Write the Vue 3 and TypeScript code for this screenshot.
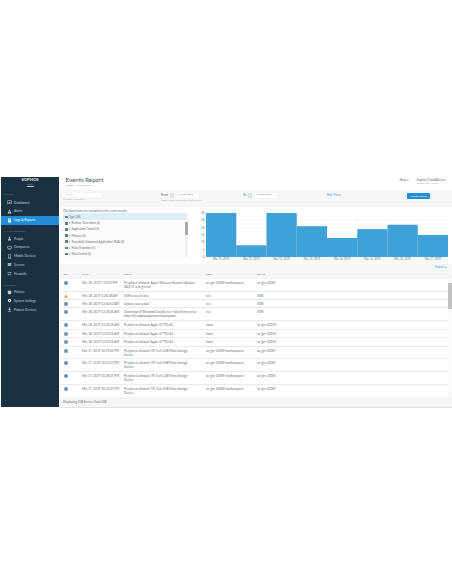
<script setup lang="ts">
interface NavItem { label: string; icon: string; active?: boolean }
interface NavGroup { title: string; items: NavItem[] }
interface EventRow { icon: string; when: string; text: string[]; user: string; device: string }

const groups: NavGroup[] = [
  {
    title: 'ANALYZE',
    items: [
      { label: 'Dashboard', icon: 'M1 1h8v7H1zM2 2v5h6V2zM3 6l1.500-2L6 5l1-1.500V6z' },
      { label: 'Alerts', icon: 'M5 1l4 8H1zM4.500 4v2.500h1V4zM4.500 7v1h1V7z' },
      { label: 'Logs & Reports', icon: 'M2 1h6v8H2zM3 3v.8h4V3zM3 5v.8h4V5z', active: true },
    ],
  },
  {
    title: 'MANAGE PROTECTION',
    items: [
      { label: 'People', icon: 'M5 1.500a1.500 1.500 0 110 3 1.500 1.500 0 010-3zM2 9c0-2.500 1.200-4 3-4s3 1.500 3 4z' },
      { label: 'Computers', icon: 'M1 2h8v5H1zM2 3v3h6V3zM3 8h4v.8H3z' },
      { label: 'Mobile Devices', icon: 'M2 1h6v8H2zM3 2v5.500h4V2z' },
      { label: 'Servers', icon: 'M1.500 2h7v1.500h-7zM1.500 4.300h7v1.500h-7zM1.500 6.600h7v1.500h-7z' },
      { label: 'Firewalls', icon: 'M1 3h6V1.500L9 3.500 7 5.200V4H1zM9 6.500H3V5L1 7l2 1.800V7.500h6z' },
    ],
  },
  {
    title: 'CONFIGURE',
    items: [
      { label: 'Policies', icon: 'M5 1l3.500 1.200V5c0 2-1.500 3.300-3.500 4-2-.7-3.500-2-3.500-4V2.200z' },
      { label: 'System Settings', icon: 'M5 1.500a3.500 3.500 0 110 7 3.500 3.500 0 010-7zM5 3.800a1.200 1.200 0 100 2.400 1.200 1.200 0 000-2.400z' },
      { label: 'Protect Devices', icon: 'M4.200 1h1.600v3.500H8L5 7.500 2 4.500h2.200zM1.500 8h7v1h-7z' },
    ],
  },
]

const filters = [
  'Type (28)',
  'Runtime Detections (4)',
  'Application Control (3)',
  'Malware (0)',
  'Potentially Unwanted Application (PUA) (0)',
  'Policy Violations (1)',
  'Web Control (0)',
]

const bars = [30, 8, 30, 21, 13, 19, 22, 15]
const dates = ['Mar 10, 2019', 'Mar 11, 2019', 'Mar 12, 2019', 'Mar 13, 2019', 'Mar 14, 2019', 'Mar 15, 2019', 'Mar 16, 2019', 'Mar 17, 2019']
const ticks = [0, 5, 10, 15, 20, 25, 30]
const CHART_H = 44
const SLOT = 30.25
const yOf = (v: number) => 5 + CHART_H - (v / 30) * CHART_H

const itf = ['Peripheral allowed: ITE Tech USB Mass Storage', 'Device']
const rows: EventRow[] = [
  { icon: 'info', when: 'Mar 18, 2019 7:39:52 PM', text: ['Peripheral allowed: Apple Wireless Network Adapter', '(802.11 a/b/g/n/ac)'], user: 'au-gin-22GM\\markanspenc', device: 'au-gin-22GM' },
  { icon: 'warn', when: 'Mar 18, 2019 1:26:28 AM', text: ['SGN is out of date'], user: 'n/a', device: 'SGN' },
  { icon: 'info', when: 'Mar 18, 2019 12:40:52 AM', text: ['Update succeeded'], user: 'n/a', device: 'SGN' },
  { icon: 'info', when: 'Mar 18, 2019 12:30:05 AM', text: ['Download of WindowsCloudServer failed from server', 'http://d1.sophosupd.com/cloudupdate'], user: 'n/a', device: 'SGN' },
  { icon: 'info', when: 'Mar 18, 2019 12:03:16 AM', text: ['Peripheral allowed: Apple 07792-A3'], user: 'swan', device: 'au-gin-22G76' },
  { icon: 'info', when: 'Mar 18, 2019 12:03:16 AM', text: ['Peripheral allowed: Apple 07792-A3'], user: 'swan', device: 'au-gin-22G76' },
  { icon: 'info', when: 'Mar 18, 2019 12:03:16 AM', text: ['Peripheral allowed: Apple 07792-A3'], user: 'swan', device: 'au-gin-22G76' },
  { icon: 'info', when: 'Mar 17, 2019 10:19:05 PM', text: itf, user: 'au-gin-22GM\\markanspenc', device: 'au-gin-22GM' },
  { icon: 'info', when: 'Mar 17, 2019 10:13:13 PM', text: itf, user: 'au-gin-22GM\\markanspenc', device: 'au-gin-22GM' },
  { icon: 'info', when: 'Mar 17, 2019 10:38:31 PM', text: itf, user: 'au-gin-22GM\\markanspenc', device: 'au-gin-22GM' },
  { icon: 'info', when: 'Mar 17, 2019 10:32:31 PM', text: itf, user: 'au-gin-22GM\\markanspenc', device: 'au-gin-22GM' },
]
</script>

<template>
  <div class="page">
    <div class="app">
      <aside class="sidebar">
        <div class="logo">
          <div class="logo-name">SOPHOS</div>
          <div class="logo-sub">Central</div>
          <div class="logo-bar"></div>
        </div>
        <section v-for="g in groups" :key="g.title" class="nav-group">
          <div class="nav-title">{{ g.title }}</div>
          <div v-for="item in g.items" :key="item.label" class="nav-item" :class="{ active: item.active }">
            <svg class="nav-icon" viewBox="0 0 10 10"><path :d="item.icon" fill="currentColor" fill-rule="evenodd" /></svg>
            <span>{{ item.label }}</span>
          </div>
        </section>
      </aside>

      <main class="main">
        <header class="header">
          <div>
            <h1>Events Report</h1>
            <div class="crumbs"><span class="crumb-link">Reports</span><span>Events Report</span></div>
          </div>
          <div class="header-right">
            <span class="help">Help ▾</span>
            <div class="account">
              <div>Sophos CloudAllied ▾</div>
              <div class="account-sub">Sophos Ltd. · Admin</div>
            </div>
          </div>
        </header>

        <div class="filter-bar">
          <div class="search-col">
            <div class="search-box">Search</div>
            <div class="hint">For name or devices</div>
          </div>
          <div class="date-col">
            <div class="date-row">
              <div class="date-group">
                <span class="date-label">From</span><span class="cal"></span><span class="date-input">Mar 10, 2019</span>
              </div>
              <div class="date-group">
                <span class="date-label short">To</span><span class="cal"></span><span class="date-input">Mar 18, 2019</span>
              </div>
            </div>
            <div class="hint">Specify date range within past 90 days</div>
          </div>
          <a class="hide-link">Hide Filters</a>
          <button class="update-btn">Update Report</button>
        </div>

        <div class="filter-panel">
          <div class="check-col">
            <div class="check-title">Checked items are included in the event results</div>
            <div class="check-list">
              <div class="check-items">
                <div v-for="(f, i) in filters" :key="f" class="check-item" :class="{ first: i === 0 }">
                  <span class="tick"></span><span v-if="i > 0" class="caret"></span><span>{{ f }}</span>
                </div>
              </div>
              <div class="check-scroll"><span></span></div>
            </div>
          </div>
          <svg class="chart" viewBox="0 0 254 56" width="254" height="56">
            <g v-for="t in ticks" :key="t">
              <line x1="12" x2="254" :y1="yOf(t)" :y2="yOf(t)" stroke="#eceff1" stroke-width="0.4" />
              <text x="10.500" :y="yOf(t) + 1" text-anchor="end" class="tick-label">{{ t }}</text>
            </g>
            <line v-for="(d, i) in dates" :key="'v' + d" :x1="12 + i * SLOT" :x2="12 + i * SLOT" y1="5" y2="49" stroke="#eceff1" stroke-width="0.4" />
            <rect v-for="(b, i) in bars" :key="i" :x="12 + i * SLOT" :y="yOf(b)" :width="SLOT" :height="yOf(0) - yOf(b)" fill="#3fa1d8" />
            <text v-for="(d, i) in dates" :key="d" :x="12 + (i + 0.5) * SLOT" y="52.300" text-anchor="middle" class="tick-label">{{ d }}</text>
          </svg>
        </div>

        <div class="export-row"><a>Export ▴</a></div>

        <div class="t-row t-head">
          <div class="c-sev">SEV</div><div class="c-when">WHEN</div><div class="c-event">EVENT</div><div class="c-user">USER</div><div class="c-device">DEVICE</div>
        </div>
        <div class="t-body">
          <div class="t-rows">
            <div v-for="(r, i) in rows" :key="i" class="t-row" :class="{ two: r.text.length > 1 }">
              <div class="c-sev">
                <svg v-if="r.icon === 'warn'" class="sev" viewBox="0 0 10 10"><path d="M5 .8l4.600 8.400H.4z" fill="#e8b13b" /><path d="M4.600 3.500h.8v3h-.8zM4.600 7h.8v.9h-.8z" fill="#4a3a10" /></svg>
                <svg v-else class="sev" viewBox="0 0 10 10"><rect x="1" y="1" width="8" height="8" fill="#3f7493" /><path d="M3 3.500h4v.8H3zM3 5.500h4v.8H3z" fill="#cfe0ea" /></svg>
              </div>
              <div class="c-when">{{ r.when }}</div>
              <div class="c-event"><div v-for="line in r.text" :key="line">{{ line }}</div></div>
              <div class="c-user">{{ r.user }}</div>
              <div class="c-device">{{ r.device }}</div>
            </div>
          </div>
          <div class="t-scroll"><span></span></div>
        </div>

        <footer class="t-foot">Displaying 208 Events Total 208</footer>
      </main>
    </div>
  </div>
</template>

<style scoped>
.page {
  width: 452px;
  height: 584px;
  padding-top: 177px;
  box-sizing: border-box;
  background: #fff;
  font-family: Lato, 'Liberation Sans', sans-serif;
  font-size: 3.1px;
  color: #667079;
  overflow: hidden;
}
.app {
  display: flex;
  height: 231px;
  padding-left: 1px;
}
.sidebar {
  width: 58px;
  flex: none;
  height: 230px;
  background: #1b3041;
  color: #c9d3da;
  font-size: 3.2px;
}
.logo {
  height: 14.800px;
  text-align: center;
  color: #e6ebee;
}
.logo-name { font-size: 4.200px; line-height: 5.500px; font-weight: 700; }
.logo-sub { font-size: 2px; line-height: 2.500px; color: #8ea0ad; }
.logo-bar { width: 7px; height: 0.800px; background: #c8d1d8; margin: 0.500px auto 0; }
.nav-group { margin-bottom: 3px; }
.nav-title {
  height: 6.500px;
  padding: 1px 0 0 3px;
  box-sizing: border-box;
  font-size: 2px;
  line-height: 3px;
  color: #73889a;
}
.nav-group + .nav-group .nav-title { padding-top: 2.400px; }
.nav-item {
  display: flex;
  align-items: center;
  gap: 2.500px;
  height: 8.800px;
  padding-left: 5.500px;
}
.nav-item.active { background: #1f8ed6; color: #fff; }
.nav-icon { width: 5px; height: 5px; flex: none; }
.main {
  flex: 1;
  min-width: 0;
  margin-left: 1px;
  display: flex;
  flex-direction: column;
}
.header {
  display: flex;
  justify-content: space-between;
  height: 13px;
  padding: 0 6px 0 5.500px;
  box-sizing: border-box;
}
h1 {
  margin: 0;
  font-size: 6.200px;
  line-height: 6.500px;
  font-weight: 400;
  color: #46535d;
}
.crumbs { display: flex; gap: 3px; font-size: 2.500px; line-height: 3.500px; color: #a3adb5; }
.crumb-link { color: #5c9ac6; }
.header-right { display: flex; gap: 8px; padding-top: 0.500px; line-height: 4px; color: #5b6770; }
.account-sub { font-size: 2.500px; line-height: 3px; color: #a3adb5; }
.filter-bar {
  display: flex;
  align-items: flex-start;
  height: 17px;
  padding: 3px 0 0 3px;
  box-sizing: border-box;
  background: #f4f6f8;
}
.search-col { width: 98px; flex: none; }
.search-box {
  width: 39px;
  height: 4.500px;
  line-height: 4.500px;
  padding-left: 3px;
  box-sizing: border-box;
  background: #fff;
  font-size: 2.400px;
  color: #b0b8be;
}
.hint { font-size: 2.400px; line-height: 5px; color: #a3adb5; }
.date-col { width: 166px; flex: none; }
.date-row { display: flex; height: 5px; }
.date-group { display: flex; align-items: center; width: 82px; }
.date-label { width: 9px; flex: none; }
.date-label.short { width: 5px; }
.cal { width: 4px; height: 4.500px; background: #dfe4e8; flex: none; }
.date-input {
  width: 22px;
  height: 4.500px;
  margin-left: 2.500px;
  line-height: 4.500px;
  background: #fff;
  padding-left: 2px;
  box-sizing: border-box;
  font-size: 2.500px;
}
.hide-link { width: 80px; flex: none; color: #5c9ac6; line-height: 5px; font-size: 2.800px; }
.update-btn {
  width: 23px;
  height: 6px;
  padding: 0;
  border: 0;
  border-radius: 1px;
  background: #1f8ed6;
  color: #fff;
  font: inherit;
  font-size: 2.600px;
  white-space: nowrap;
}
.filter-panel {
  display: flex;
  height: 57px;
  padding-left: 3px;
  background: #fff;
}
.check-col { width: 125px; flex: none; padding-top: 2px; }
.check-title { font-size: 3.100px; line-height: 4.500px; color: #5b6770; }
.check-list {
  height: 44px;
  display: flex;
  background: #fafbfc;
}
.check-items { flex: 1; }
.check-item {
  display: flex;
  align-items: center;
  gap: 1.500px;
  height: 6.100px;
  padding-left: 2px;
  font-size: 2.800px;
}
.check-item.first { background: #dcedf8; height: 7px; }
.tick { width: 2.500px; height: 2.500px; background: #6d7a84; }
.caret { width: 0; height: 0; border-left: 1.800px solid #6d7a84; border-top: 1.200px solid transparent; border-bottom: 1.200px solid transparent; }
.check-scroll { width: 3px; background: #f1f1f1; padding-top: 9px; }
.check-scroll span { display: block; height: 13px; background: #a9a9a9; }
.chart { flex: none; margin: 1px 0 0 6px; }
.tick-label { font-size: 2.800px; fill: #5b6770; }
.export-row {
  height: 7px;
  padding-right: 5px;
  box-sizing: border-box;
  text-align: right;
  line-height: 6px;
  background: #f4f6f8;
  color: #5c9ac6;
}
.t-row {
  display: flex;
  height: 8.440px;
  padding-top: 2px;
  box-sizing: border-box;
  border-bottom: 0.500px solid #e8ecef;
  line-height: 4px;
  background: #fff;
}
.t-row.two { height: 12.800px; }
.t-head {
  height: 8px;
  background: #f4f6f8;
  font-size: 2.400px;
  color: #6d7a84;
  border-bottom: 0;
}
.t-body { display: flex; height: 119px; overflow: hidden; }
.t-rows { flex: 1; min-width: 0; }
.c-sev { width: 22px; flex: none; padding-left: 3.500px; box-sizing: border-box; }
.c-when { width: 42px; flex: none; }
.c-event { width: 82px; flex: none; }
.c-user { width: 51px; flex: none; }
.c-device { flex: 1; }
.sev { display: block; width: 4px; height: 4px; }
.t-scroll { width: 4px; flex: none; background: #fafafa; }
.t-scroll span { display: block; height: 26px; margin-top: 4px; background: #c2c2c2; }
.t-foot {
  height: 10px;
  line-height: 10px;
  padding-left: 3px;
  background: #f4f6f8;
  border-bottom: 0.500px solid #dfe3e6;
}
</style>
